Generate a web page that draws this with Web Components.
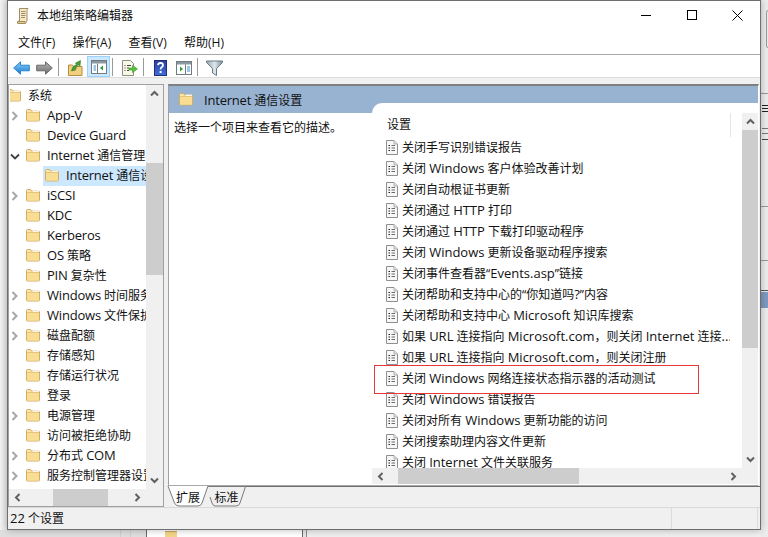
<!DOCTYPE html>
<html lang="zh">
<head>
<meta charset="utf-8">
<title>本地组策略编辑器</title>
<style>
  html, body { margin: 0; height: 100%; overflow: hidden; background: #ececec; }
  body { font: 12px/18px "Open Sans", "Noto Sans CJK SC", sans-serif; color: #111; }
</style>
</head>
<body>
<desk-top>
  <gpe-window>
    <gpe-titlebar slot="title">本地组策略编辑器</gpe-titlebar>
    <gpe-menubar slot="menu">
      <span>文件(F)</span><span>操作(A)</span><span>查看(V)</span><span>帮助(H)</span>
    </gpe-menubar>
    <gpe-toolbar slot="tools"></gpe-toolbar>

    <gpe-tree slot="tree">
      <tree-row level="0">系统</tree-row>
      <tree-row level="1" toggle="closed">App-V</tree-row>
      <tree-row level="1">Device Guard</tree-row>
      <tree-row level="1" toggle="open">Internet 通信管理</tree-row>
      <tree-row level="2" selected>Internet 通信设置</tree-row>
      <tree-row level="1" toggle="closed">iSCSI</tree-row>
      <tree-row level="1">KDC</tree-row>
      <tree-row level="1">Kerberos</tree-row>
      <tree-row level="1">OS 策略</tree-row>
      <tree-row level="1">PIN 复杂性</tree-row>
      <tree-row level="1" toggle="closed">Windows 时间服务</tree-row>
      <tree-row level="1" toggle="closed">Windows 文件保护</tree-row>
      <tree-row level="1" toggle="closed">磁盘配额</tree-row>
      <tree-row level="1">存储感知</tree-row>
      <tree-row level="1">存储运行状况</tree-row>
      <tree-row level="1">登录</tree-row>
      <tree-row level="1" toggle="closed">电源管理</tree-row>
      <tree-row level="1">访问被拒绝协助</tree-row>
      <tree-row level="1" toggle="closed">分布式 COM</tree-row>
      <tree-row level="1" toggle="closed">服务控制管理器设置</tree-row>
    </gpe-tree>

    <gpe-detail slot="detail" heading="Internet 通信设置" hint="选择一个项目来查看它的描述。" column="设置">
      <policy-row>关闭手写识别错误报告</policy-row>
      <policy-row>关闭 Windows 客户体验改善计划</policy-row>
      <policy-row>关闭自动根证书更新</policy-row>
      <policy-row>关闭通过 HTTP 打印</policy-row>
      <policy-row>关闭通过 HTTP 下载打印驱动程序</policy-row>
      <policy-row>关闭 Windows 更新设备驱动程序搜索</policy-row>
      <policy-row>关闭事件查看器“Events.asp”链接</policy-row>
      <policy-row>关闭帮助和支持中心的“你知道吗?”内容</policy-row>
      <policy-row>关闭帮助和支持中心 Microsoft 知识库搜索</policy-row>
      <policy-row>如果 URL 连接指向 Microsoft.com，则关闭 Internet 连接...</policy-row>
      <policy-row>如果 URL 连接指向 Microsoft.com，则关闭注册</policy-row>
      <policy-row>关闭 Windows 网络连接状态指示器的活动测试</policy-row>
      <policy-row>关闭 Windows 错误报告</policy-row>
      <policy-row>关闭对所有 Windows 更新功能的访问</policy-row>
      <policy-row>关闭搜索助理内容文件更新</policy-row>
      <policy-row>关闭 Internet 文件关联服务</policy-row>
    </gpe-detail>

    <gpe-tabs slot="tabs"></gpe-tabs>
    <gpe-status slot="status">22 个设置</gpe-status>
    <red-mark slot="mark"></red-mark>
  </gpe-window>
</desk-top>

<script>
  const FOLDER = `
    <svg width="14" height="13" viewBox="0 0 14 13">
      <path d="M.5 1.500Q.5.5 1.500.5h3l1 1.500h7q1 0 1 1v8q0 1-1 1h-11q-1 0-1-1z" fill="#fbe7a8" stroke="#d2ad66"/>
      <path d="M1 4h12v7.500H1z" fill="#f9dd92"/>
      <path d="M6.500 1.500h6.500v1.500H6.500z" fill="#fff" opacity=".8"/>
      <path d="M1 3.500h12" stroke="#e4c47e"/>
    </svg>`;

  // latin runs get their own span so they can be sized apart from the cjk text
  function wrapLatin(el) {
    const text = el.textContent;
    el.textContent = '';
    text.split(/([\x21-\x7e]+(?: [\x21-\x7e]+)*)/).forEach((part, i) => {
      if (!part) return;
      if (i % 2) {
        const span = document.createElement('span');
        span.textContent = part;
        el.appendChild(span);
      } else {
        el.appendChild(document.createTextNode(part));
      }
    });
  }

  class ShadowBase extends HTMLElement {
    constructor() {
      super();
      this.attachShadow({ mode: 'open' });
    }
    connectedCallback() {
      this.shadowRoot.innerHTML = this.render();
    }
  }

  class DeskTop extends ShadowBase {
    render() {
      return `
        <style>
          :host { display: block; position: relative; width: 768px; height: 537px; overflow: hidden;
            background: linear-gradient(90deg, #f2f2f2, #e6e6e6 7px); }
          .win { position: absolute; }
          .back { left: 146px; top: 530px; width: 155px; height: 10px; background: #fff;
            border-left: 1px solid #666; border-right: 1px solid #666; }
          .back2 { left: 301px; top: 530px; width: 467px; height: 10px; background: #efefef; border-left: 1px solid #8a8a8a; margin-left: 5px; }
          .back3 { left: 0; top: 530px; width: 146px; height: 10px; background: #dfdfdf; }
          .tick { top: 530px; width: 1px; height: 10px; background: #cfcfcf; }
          .side { left: 761px; top: 0; width: 7px; height: 537px; background: #ececec; }
          .blue { left: 761px; top: 292px; width: 7px; height: 16px; background: #7d9abf; }
          .rule { left: 761px; width: 7px; height: 1px; background: #9a9a9a; }
          .round { left: 766px; top: 10px; width: 4px; height: 38px; border: 1px solid #999; border-radius: 2px; box-sizing: border-box; }
          .dark { left: 762px; width: 6px; height: 1px; background: #222; }
          .folder { left: 165px; top: 531px; width: 12px; height: 6px; background: #f3d587; border-top: 1px solid #c9a45c; }
          .front { position: relative; display: block; margin-left: 7px; width: 754px; height: 530px; }
        </style>
        <div class="win back3"></div>
        <div class="win tick" style="left:120px"></div>
        <div class="win tick" style="left:130px"></div>
        <div class="win back"></div>
        <div class="win folder"></div>
        <div class="win back2"></div>
        <div class="win side"></div>
        <div class="win round"></div>
        <div class="win dark" style="top:105px"></div>
        <div class="win dark" style="top:108px"></div>
        <div class="win dark" style="top:111px"></div>
        <div class="win rule" style="top:93px"></div>
        <div class="win dark" style="top:128px;background:#777"></div>
        <div class="win dark" style="top:133px;background:#777"></div>
        <div class="win dark" style="top:139px;background:#444"></div>
        <div class="win rule" style="top:206px"></div>
        <div class="win rule" style="top:260px"></div>
        <div class="win rule" style="top:290px;background:#555"></div>
        <div class="win blue"></div>
        <div class="front"><slot></slot></div>`;
    }
  }

  class GpeWindow extends ShadowBase {
    render() {
      return `
        <style>
          :host { display: flex; flex-direction: column; box-sizing: border-box; position: relative;
            width: 754px; height: 530px; background: #f0f0f0; border: 1px solid #6e6e6e;
            box-shadow: 0 0 7px rgba(0,0,0,.28); }
          .main { display: flex; gap: 4px; padding-top: 6px; height: 423px; }
          .right { display: flex; flex-direction: column; width: 592px; }
        </style>
        <slot name="title"></slot>
        <slot name="menu"></slot>
        <slot name="tools"></slot>
        <div class="main">
          <slot name="tree"></slot>
          <div class="right">
            <slot name="detail"></slot>
            <slot name="tabs"></slot>
          </div>
        </div>
        <slot name="status"></slot>
        <slot name="mark"></slot>`;
    }
  }

  class GpeTitlebar extends ShadowBase {
    render() {
      return `
        <style>
          :host { display: flex; align-items: center; height: 30px; background: #fff; color: #111;
            padding-left: 9px; }
          svg { display: block; flex: none; }
          .text { margin-left: 8px; flex: 1; }
          .btns { display: flex; }
          .btn { width: 45.500px; height: 30px; box-sizing: border-box; padding-bottom: 2px; display: flex; align-items: center; justify-content: center; }
        </style>
        <svg width="12" height="16" viewBox="0 0 12 16">
          <path d="M2.500.5h8.500q-1 1-1 2v9.500q0 1.500-1.500 3.500H1q-1 0-.5-1.500.5-1 2-1z" fill="#f6e9c4" stroke="#a08e62"/>
          <path d="M4 3.500h4.500M4 5.500h4.500M4 7.500h4.500M4 9.500h4" stroke="#9c8f6e"/>
          <path d="M.5 13.500h7.500q.5 1-.5 2H1q-1-.5-.5-2z" fill="#e4c98a" stroke="#a08e62"/>
        </svg>
        <div class="text"><slot></slot></div>
        <div class="btns">
          <div class="btn"><svg width="10" height="10"><path d="M0 5.500h10" stroke="#000"/></svg></div>
          <div class="btn"><svg width="10" height="10"><rect x=".5" y=".5" width="9" height="9" fill="none" stroke="#000"/></svg></div>
          <div class="btn"><svg width="11" height="11"><path d="M.5.500l10 10M10.500.500l-10 10" stroke="#000" stroke-width="1"/></svg></div>
        </div>`;
    }
  }

  class GpeMenubar extends ShadowBase {
    render() {
      return `
        <style>
          :host { display: block; height: 23px; background: #fff; border-bottom: 1px solid #a9a9a9; }
          .row { display: flex; gap: 17.300px; padding: 3px 0 0 10px; line-height: 18px; }
          ::slotted(span) { display: block; }
        </style>
        <div class="row"><slot></slot></div>`;
    }
  }

  class GpeToolbar extends ShadowBase {
    render() {
      return `
        <style>
          :host { display: flex; height: 22px; background: #fff; border-bottom: 1px solid #dcdcdc; padding-left: 2px; }
          .b { width: 23px; height: 22px; box-sizing: border-box; padding-top: 3px; display: flex; align-items: center; justify-content: center; }
          .on { background: #cce8ff; border: 1px solid #99d1ff; margin-top: 1px; height: 21px; padding-top: 1px; }
          .sep { width: 1px; height: 18px; margin: 3px 5px 0 2px; background: #9a9a9a; }
          svg { display: block; }
        </style>
        <div class="b"><svg width="17" height="14" viewBox="0 0 17 14">
          <defs><linearGradient id="bl" x1="0" y1="0" x2="0" y2="1"><stop offset="0" stop-color="#8fd0f7"/><stop offset="1" stop-color="#1678d2"/></linearGradient></defs>
          <path d="M.7 7L7.500.8v3.400h8.800v5.600H7.500v3.400z" fill="url(#bl)" stroke="#2a86cf"/></svg></div>
        <div class="b"><svg width="17" height="14" viewBox="0 0 17 14">
          <defs><linearGradient id="gr" x1="0" y1="0" x2="0" y2="1"><stop offset="0" stop-color="#b5b5b5"/><stop offset="1" stop-color="#6f6f6f"/></linearGradient></defs>
          <path d="M16.300 7L9.500.8v3.400H.7v5.600h8.800v3.400z" fill="url(#gr)" stroke="#6a6a6a"/></svg></div>
        <div class="sep"></div>
        <div class="b"><svg width="15" height="16" viewBox="0 0 15 16">
          <path d="M.5 5h4l1 1.500h8.500v9H.5z" fill="#f2cf7c" stroke="#b48c45"/>
          <path d="M3.500 11q.5-5 5-6.500L7.500 3l5-2.500L12 6l-1.500-1q-3 1.500-3 5z" fill="#4c9c3a" stroke="#2f7a26" stroke-width=".6"/></svg></div>
        <div class="b on"><svg width="16" height="14" viewBox="0 0 16 14">
          <rect x=".5" y=".5" width="15" height="13" fill="#fff" stroke="#6f7b84"/>
          <path d="M1 1h14v2.500H1z" fill="#8d979e"/>
          <path d="M6.500 3.500v10" stroke="#6f7b84"/>
          <path d="M2.500 6h2.500M2.500 8h2.500M2.500 10h2.500" stroke="#3f8fd0" stroke-width="1.200"/>
          <path d="M12 5.500v5L9 8z" fill="#2f9a3a"/></svg></div>
        <div class="sep"></div>
        <div class="b"><svg width="17" height="16" viewBox="0 0 17 16">
          <path d="M1.500.5h8l3 3v12h-11z" fill="#fbf7e6" stroke="#8d8d80"/>
          <path d="M3.500 5.500h1M3.500 8h1M3.500 10.500h1M6 5.500h4M6 8h2M6 10.500h2" stroke="#444"/>
          <path d="M8 8h3.500V5.500L16.500 9l-5 3.500V10H8z" fill="#57c13c" stroke="#3b9a2a" stroke-width=".6"/></svg></div>
        <div class="sep"></div>
        <div class="b"><svg width="13" height="16" viewBox="0 0 13 16">
          <defs><linearGradient id="hp" x1="0" y1="0" x2="0" y2="1"><stop offset="0" stop-color="#2c3f9f"/><stop offset="1" stop-color="#3f6fd8"/></linearGradient></defs>
          <rect x=".5" y=".5" width="12" height="15" fill="url(#hp)" stroke="#1f2b78"/>
          <path d="M4 5.200Q4.200 3 6.500 3 9 3 9 5.200 9 6.500 7.500 7.300 6.600 7.800 6.600 9.500" fill="none" stroke="#fff" stroke-width="1.800"/>
          <rect x="5.600" y="11" width="2" height="2" fill="#fff"/></svg></div>
        <div class="b"><svg width="16" height="14" viewBox="0 0 16 14">
          <rect x=".5" y=".5" width="15" height="13" fill="#fff" stroke="#6f7b84"/>
          <path d="M1 1h14v2.500H1z" fill="#8d979e"/>
          <path d="M9.500 3.500v10" stroke="#6f7b84"/>
          <path d="M11 6h3M11 8h3M11 10h3" stroke="#3f8fd0" stroke-width="1.200"/>
          <path d="M4 5.500v5L7 8z" fill="#2f9a3a"/></svg></div>
        <div class="sep"></div>
        <div class="b"><svg width="17" height="16" viewBox="0 0 17 16">
          <defs><linearGradient id="fn" x1="0" y1="0" x2="1" y2="0"><stop offset="0" stop-color="#8fa3b0"/><stop offset=".5" stop-color="#dfe7ec"/><stop offset="1" stop-color="#7b8f9c"/></linearGradient></defs>
          <path d="M.5 1h16v1.500L10.500 8.500v7L6.500 13V8.500L.5 2.500z" fill="url(#fn)" stroke="#687a86"/></svg></div>`;
    }
  }

  class WinScrollbar extends ShadowBase {
    render() {
      const horiz = this.getAttribute('orient') === 'h';
      const up = '<svg width="9" height="7"><path d="M1 5.500l3.500-3.500 3.500 3.500" fill="none" stroke="#606060" stroke-width="2"/></svg>';
      const down = '<svg width="9" height="7"><path d="M1 1.500l3.500 3.500 3.500-3.500" fill="none" stroke="#606060" stroke-width="2"/></svg>';
      const left = '<svg width="7" height="9"><path d="M5.500 1L2 4.500 5.500 8" fill="none" stroke="#606060" stroke-width="2"/></svg>';
      const right = '<svg width="7" height="9"><path d="M1.500 1L5 4.500 1.500 8" fill="none" stroke="#606060" stroke-width="2"/></svg>';
      return `
        <style>
          :host { display: flex; flex: none; background: #f0f0f0; flex-direction: ${horiz ? 'row' : 'column'}; }
          .arrow { flex: none; ${horiz ? 'width: 17px' : 'height: 17px'}; display: flex; align-items: center; justify-content: center; }
          .track { flex: 1; min-width: 0; min-height: 0; }
          .thumb { background: #cdcdcd; ${horiz
            ? `height: 100%; margin-left: ${this.getAttribute('start')}px; width: ${this.getAttribute('size')}px`
            : `width: 100%; margin-top: ${this.getAttribute('start')}px; height: ${this.getAttribute('size')}px`}; }
        </style>
        <div class="arrow">${horiz ? left : up}</div>
        <div class="track"><div class="thumb"></div></div>
        <div class="arrow">${horiz ? right : down}</div>`;
    }
  }

  class GpeTree extends ShadowBase {
    render() {
      return `
        <style>
          :host { display: grid; grid-template-columns: 137px 17px; grid-template-rows: 404px 17px; flex: none;
            width: 156px; height: 423px; box-sizing: border-box; border: 1px solid #a0a0a0; background: #f0f0f0; }
          .list { background: #fff; overflow: hidden; border-left: 1px solid #fff; padding-top: 1px; box-sizing: border-box; }
          .h { grid-column: 1; }
          win-scrollbar[orient=v] { height: 404px; }
        </style>
        <div class="list"><slot></slot></div>
        <win-scrollbar orient="v" start="61" size="112"></win-scrollbar>
        <win-scrollbar class="h" orient="h" start="27" size="55"></win-scrollbar>`;
    }
  }

  class TreeRow extends ShadowBase {
    connectedCallback() {
      super.connectedCallback();
      wrapLatin(this);
    }
    render() {
      const level = Number(this.getAttribute('level') || 0);
      const toggle = this.getAttribute('toggle');
      // rows with latin text sit a pixel low because of the bigger latin size
      const lift = /[\x21-\x7e]/.test(this.textContent) ? 2 : 0;
      let chevron = '';
      if (toggle === 'closed') {
        chevron = '<svg width="7" height="10"><path d="M1.500 1l4 4-4 4" fill="none" stroke="#a6a6a6" stroke-width="2"/></svg>';
      } else if (toggle === 'open') {
        chevron = '<svg width="10" height="7"><path d="M1 1.500l4 4 4-4" fill="none" stroke="#404040" stroke-width="1.800"/></svg>';
      }
      return `
        <style>
          :host { display: flex; height: 20px; align-items: center; white-space: nowrap; }
          .tog { flex: none; width: 16px; margin-left: ${19 * level - 19}px; display: flex; justify-content: center; padding-right: 7px; box-sizing: border-box; }
          .item { flex: 1; min-width: 0; height: 20px; display: flex; align-items: center; margin-left: -2px; padding-left: 2px; overflow: hidden;
            background: ${this.hasAttribute('selected') ? '#cce8ff' : 'transparent'}; }
          svg { display: block; flex: none; }
          .item svg { margin-bottom: 1px; }
          .label { margin-left: 7px; margin-bottom: ${lift}px; }
          ::slotted(span) { font-size: 13px; letter-spacing: -.2px; }
        </style>
        <div class="tog">${chevron}</div>
        <div class="item">${FOLDER}<div class="label"><slot></slot></div></div>`;
    }
  }

  class GpeDetail extends ShadowBase {
    render() {
      return `
        <style>
          :host { display: flex; flex-direction: column; box-sizing: border-box; width: 591px; height: 402px; flex: none;
            background: #fff; border-top: 2px solid #7f7f7f; border-left: 1px solid #a0a0a0; border-right: 1px solid #fff; border-bottom: 1px solid #a9a9a9; }
          .head { display: flex; align-items: center; gap: 11px; height: 27px; flex: none; background: #98b3d1; padding: 0 0 0 10px; box-sizing: border-box; white-space: nowrap; }
          .title { display: block; margin-top: 1px; }
          .title span { font-size: 13px; letter-spacing: -.2px; }
          .head svg { display: block; margin-top: -1px; }
          .body { display: flex; flex: 1; min-height: 0; }
          .hint { width: 203px; flex: none; padding: 6px 0 0 5px; box-sizing: border-box; }
          .panel { position: relative; margin-top: -10px; width: 386px; height: 381px; display: grid;
            grid-template-columns: 370px 16px; grid-template-rows: 365px 16px;
            background: #fff; border-top-left-radius: 10px; }
          .list { overflow: hidden; }
          .col { margin-top: 10px; height: 24px; width: 359px; box-sizing: border-box; border-right: 1px solid #e5e5e5; padding: 3px 0 0 15px; }
          win-scrollbar[orient=v] { margin-top: 10px; height: 355px; }
          .corner { background: #f0f0f0; }
        </style>
        <div class="head">${FOLDER}<div class="title"></div></div>
        <div class="body">
          <div class="hint">${this.getAttribute('hint')}</div>
          <div class="panel">
            <div class="list">
              <div class="col">${this.getAttribute('column')}</div>
              <slot></slot>
            </div>
            <win-scrollbar orient="v" start="0" size="218"></win-scrollbar>
            <win-scrollbar orient="h" start="9" size="181"></win-scrollbar>
            <div class="corner"></div>
          </div>
        </div>`;
    }
    connectedCallback() {
      super.connectedCallback();
      const title = this.shadowRoot.querySelector('.title');
      title.textContent = this.getAttribute('heading');
      wrapLatin(title);
    }
  }

  class PolicyRow extends ShadowBase {
    connectedCallback() {
      super.connectedCallback();
      wrapLatin(this);
    }
    render() {
      return `
        <style>
          :host { display: flex; height: 21px; align-items: center; padding-left: 14px; white-space: nowrap; }
          svg { display: block; flex: none; margin-right: 4px; }
          .t { overflow: hidden; width: 328px; }
          ::slotted(span) { font-size: 13px; }
        </style>
        <svg width="12" height="15" viewBox="0 0 12 15">
          <path d="M.5.5h7.500l3.500 3.500v10.500H.5z" fill="#f7f7f7" stroke="#8f8f8f"/>
          <path d="M8 .5v3.500h3.500" fill="#e2e2e2" stroke="#b0b0b0"/>
          <path d="M2.500 5.500h1.500M2.500 8h1.500M2.500 10.500h1.500" stroke="#222"/>
          <path d="M5.500 5.500h3.500M5.500 8h3.500M5.500 10.500h3.500" stroke="#6a6a6a"/>
        </svg>
        <div class="t"><slot></slot></div>`;
    }
  }

  class GpeTabs extends ShadowBase {
    render() {
      return `
        <style>
          :host { display: flex; height: 21px; flex: none; margin-left: -1px; }
          .tab { position: relative; flex: none; height: 21px; text-align: center; }
          .tab svg { position: absolute; left: 0; top: 0; }
          .tab span { position: relative; display: block; padding-top: 3px; }
          .one { width: 42px; }
          .two { width: 37px; margin-left: -1px; }
          .rest { flex: 1; height: 1px; background: #6f6f6f; }
        </style>
        <div class="tab one">
          <svg width="42" height="21"><path d="M1 0L7.500 17Q9 20 12 20H31Q34 20 35 17L41 0" fill="#fff" stroke="#7a7a7a"/></svg>
          <span>扩展</span>
        </div>
        <div class="tab two">
          <svg width="38" height="21"><path d="M0 .5H37.500L32 17Q31 20 28 20H7Q5 20 4 17L2 11" fill="#f0f0f0" stroke="#7a7a7a"/></svg>
          <span>标准</span>
        </div>
        <div class="rest"></div>`;
    }
  }

  class GpeStatus extends ShadowBase {
    connectedCallback() {
      super.connectedCallback();
      wrapLatin(this);
    }
    render() {
      return `
        <style>
          :host { display: flex; box-sizing: border-box; height: 22px; border-top: 1px solid #d9d9d9; background: #f0f0f0; }
          .a { width: 664px; padding: 1px 0 0 2px; box-sizing: border-box; border-right: 1px solid #dcdcdc; }
          .b { width: 85px; border-right: 1px solid #dcdcdc; }
          ::slotted(span) { font-size: 13px; }
        </style>
        <div class="a"><slot></slot></div>
        <div class="b"></div>`;
    }
  }

  // the red annotation somebody drew over the screenshot
  class RedMark extends ShadowBase {
    render() {
      return `
        <style>
          :host { position: absolute; left: 366px; top: 364px; width: 325px; height: 29px; box-sizing: border-box;
            border: 1px solid #e8383a; pointer-events: none; }
        </style>`;
    }
  }

  customElements.define('desk-top', DeskTop);
  customElements.define('win-scrollbar', WinScrollbar);
  customElements.define('gpe-titlebar', GpeTitlebar);
  customElements.define('gpe-menubar', GpeMenubar);
  customElements.define('gpe-toolbar', GpeToolbar);
  customElements.define('gpe-tree', GpeTree);
  customElements.define('tree-row', TreeRow);
  customElements.define('gpe-detail', GpeDetail);
  customElements.define('policy-row', PolicyRow);
  customElements.define('gpe-tabs', GpeTabs);
  customElements.define('gpe-status', GpeStatus);
  customElements.define('red-mark', RedMark);
  customElements.define('gpe-window', GpeWindow);
</script>
</body>
</html>
